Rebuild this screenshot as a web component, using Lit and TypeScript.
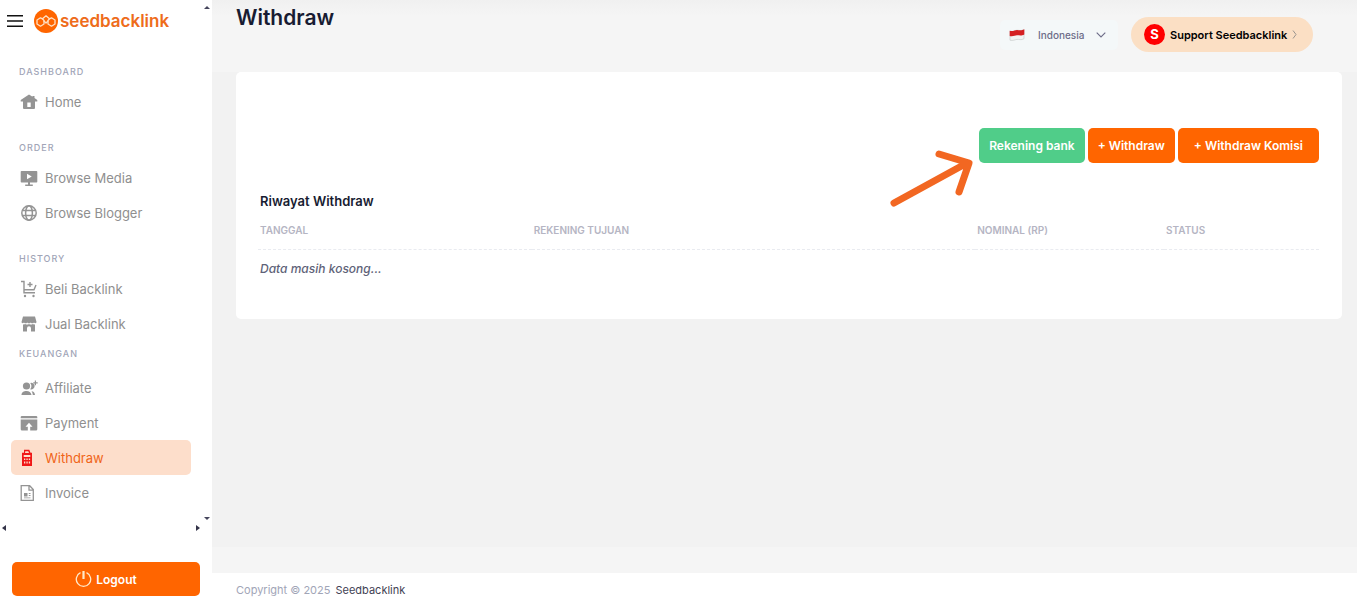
import { LitElement, html, css, svg, nothing } from "lit";
import { customElement, property } from "lit/decorators.js";
import { classMap } from "lit/directives/class-map.js";

const icons: Record<string, unknown> = {
  home: svg`<path fill-rule="evenodd" d="M9 1.500.7 7v1.500H3V15a1 1 0 0 0 1 1h10a1 1 0 0 0 1-1V8.500h2.300V7L14.500 5V3h-2v.8zM7.300 9.500h3.400V14H7.300z" fill="currentColor"/>`,
  media: svg`<path fill-rule="evenodd" d="M1.500 2h15a.8.8 0 0 1 .8.8v10a.8.8 0 0 1-.8.800H10v1.800h2.800V17H5.200v-1.600H8v-1.800H1.500a.8.8 0 0 1-.8-.8v-10a.8.8 0 0 1 .8-.8zM7 4.800v5.400L11.800 7.500z" fill="currentColor"/>`,
  globe: svg`<g fill="none" stroke="currentColor" stroke-width="1.500"><circle cx="9" cy="9" r="7.200"/><ellipse cx="9" cy="9" rx="3.400" ry="7.200"/><path d="M2.300 6.500h13.400M2.300 11.500h13.400"/></g>`,
  cart: svg`<g fill="none" stroke="currentColor" stroke-width="1.400"><path d="M1 1.500h3v11.300h11M4 9.700h10L16 5M10 2v5M7.500 4.500h5"/></g><circle cx="5" cy="16" r="1.200" fill="currentColor"/><circle cx="13.500" cy="16" r="1.200" fill="currentColor"/>`,
  store: svg`<path d="M3 1.500h12l1.500 5.500c0 1.300-1.700 1.600-2.500.4-.8 1.200-2.400 1.200-3.200 0-.8 1.200-2.800 1.200-3.600 0-.8 1.200-2.400 1.200-3.200 0-.8 1.200-2.500.9-2.500-.4z" fill="currentColor"/><path d="M3 9.300c1 .4 1.600.1 2.200-.3 1 .7 2.600.7 3.800 0 1.200.7 2.800.7 3.800 0 .6.400 1.200.7 2.200.3V16.500h-4v-3.300a2 2 0 0 0-4 0v3.300H3z" fill="currentColor"/>`,
  affiliate: svg`<g fill="currentColor"><circle cx="6.500" cy="7" r="3.600"/><path d="M10.200 4a3.300 3.300 0 1 1 0 6.200 5 5 0 0 0 0-6.200zM1.500 16c0-2.800 2.300-4 5-4s4.500 1.200 5 4zM11.500 12.200c2.200.1 3.300 1.300 3.500 3.800h-2.200c-.1-1.600-.5-2.800-1.300-3.800zM13.300 3.200h1.500V1.500l1.200.1v1.600h1.700v1.300H16v1.800h-1.300V4.500h-1.400z"/></g>`,
  payment: svg`<path d="M1.500 2h15l.8.800v1.400H.7V2.800zM.7 5.500h16.600v9.700a1.300 1.300 0 0 1-1.300 1.300h-5.800v-3.800h2.300L9 8.700l-3.500 4h2.300v3.800H2a1.300 1.300 0 0 1-1.300-1.300z" fill="currentColor"/>`,
  withdraw: svg`<path fill-rule="evenodd" d="M4 .8h5.300l1.200 3H12V17H2V3.800h2zM5.300 2.200l-.3 1.800h4l-.7-1.800zM3.700 6v2h6.600V6zM4 9.500v1.500h1.300V9.500zM6.400 9.500v1.500h1.300V9.500zM8.800 9.500v1.500h1.300V9.500zM4 12.500v2h1.300v-2zM6.400 12.500v2h1.300v-2zM8.800 12.500v2h1.300v-2z" fill="currentColor"/>`,
  invoice: svg`<path d="M1.200 1.700h8.500l3.600 3.800v10.800H1.200zM9 1.700v4.500h4.300" fill="none" stroke="currentColor" stroke-width="1.300"/><path d="M4 9h3.500v3.500H4zM8.800 9h1.700v1H8.800zM8.800 11h1.700v1H8.800zM4 13.500h6.500v.8H4z" fill="currentColor"/>`,
};

interface NavItem { icon: string; label: string; active?: boolean }
interface NavGroup { title: string; items: NavItem[]; tight?: boolean }

const groups: NavGroup[] = [
  { title: "Dashboard", items: [{ icon: "home", label: "Home" }] },
  { title: "Order", items: [{ icon: "media", label: "Browse Media" }, { icon: "globe", label: "Browse Blogger" }] },
  { title: "History", items: [{ icon: "cart", label: "Beli Backlink" }, { icon: "store", label: "Jual Backlink" }] },
  {
    title: "Keuangan",
    tight: true,
    items: [
      { icon: "affiliate", label: "Affiliate" },
      { icon: "payment", label: "Payment" },
      { icon: "withdraw", label: "Withdraw", active: true },
      { icon: "invoice", label: "Invoice" },
    ],
  },
];

@customElement("side-nav")
export class SideNav extends LitElement {
  @property({ attribute: false }) groups: NavGroup[] = [];

  static styles = css`
    :host { display: flex; flex-direction: column; background: #fff; height: 100vh; min-height: 0; }
    button { font: inherit; cursor: pointer; }
    .scroll { flex: 1; min-height: 0; display: grid; grid-template-columns: 1fr 10px; grid-template-rows: 1fr 12px; }
    .content { overflow: hidden; min-height: 0; }
    .vbar { display: flex; flex-direction: column; justify-content: space-between; align-items: center; padding: 6px 0 2px; }
    .hbar { display: flex; justify-content: space-between; align-items: center; padding: 0 2px; }
    .bar-end { display: block; }
    .brand { display: flex; align-items: center; gap: 11px; height: 42px; padding-left: 7px; }
    .burger { display: flex; padding: 0; border: 0; background: none; }
    .logo { display: flex; align-items: center; gap: 2px; color: #ee6c1b; text-decoration: none; font-size: 17px; line-height: 24px; font-weight: 600; }
    nav { padding: 19px 11px 0; }
    .group { margin-bottom: 18px; }
    .group.near { margin-bottom: 2px; }
    .title { margin: 0; padding: 0 0 1px 8px; font-size: 9px; line-height: 22px; font-weight: 500; letter-spacing: 1px; text-transform: uppercase; color: #a1a5b7; }
    .tight .title { padding-bottom: 5px; }
    ul { margin: 0; padding: 0; list-style: none; }
    .item { display: flex; align-items: center; gap: 7px; height: 35px; padding-left: 9px; border-radius: 5px; color: #8f8f8f; font-size: 13px; text-decoration: none; }
    .item.active { background: #fddecb; color: #f06418; }
    .item svg { color: #949494; }
    .item.active svg { color: #f01818; }
    .foot { padding: 28px 12px 3px; }
    .logout { display: flex; align-items: center; justify-content: center; gap: 4px; width: 100%; height: 34px; border: 0; border-radius: 5px; background: #ff6500; color: #fff; font-size: 12px; font-weight: 600; }
  `;

  render() {
    return html`
      <div class="scroll">
        <div class="content">
          <div class="brand">
            <button class="burger" aria-label="Menu">
              <svg width="16" height="12" viewBox="0 0 16 12"><path d="M0 .8h16M0 6h16M0 11.200h16" stroke="#111" stroke-width="1.500"/></svg>
            </button>
            <a class="logo" href="#">
              <svg width="24" height="24" viewBox="0 0 24 24">
                <circle cx="12" cy="12" r="12" fill="#ff6500"/>
                <g fill="none" stroke="#ffe0c4" stroke-width="1.300" stroke-linejoin="round" stroke-linecap="round">
                  <path d="m8.500 9.800-2-1L3 11v4l3.500 2.200L10 15v-3.500L8.500 9.800"/>
                  <path d="m15.500 9.800 2-1L21 11v4l-3.500 2.200L14 15v-3.500l1.500-1.700"/>
                  <path d="M8.500 9.800 12 6.800l3.500 3M10 12l2 2 2-2"/>
                </g>
              </svg>
              seedbacklink
            </a>
          </div>
          <nav>
            ${this.groups.map((g, i) => html`
              <section class=${classMap({ group: true, tight: !!g.tight, near: !!this.groups[i + 1]?.tight })}>
                <h2 class="title">${g.title}</h2>
                <ul>
                  ${g.items.map((it) => html`
                    <li><a href="#" class=${classMap({ item: true, active: !!it.active })} aria-current=${it.active ? "page" : nothing}>
                      <svg width="18" height="18" viewBox="0 0 18 18">${icons[it.icon]}</svg>${it.label}
                    </a></li>`)}
                </ul>
              </section>`)}
          </nav>
        </div>
        <div class="vbar" aria-hidden="true">
          <svg class="bar-end" width="6" height="3"><path d="M0 3 3 0l3 3z" fill="#45455c"/></svg>
          <svg class="bar-end" width="6" height="3"><path d="M0 0h6L3 3z" fill="#45455c"/></svg>
        </div>
        <div class="hbar" aria-hidden="true">
          <svg class="bar-end" width="4" height="6"><path d="M4 0v6L0 3z" fill="#333348"/></svg>
          <svg class="bar-end" width="4" height="6"><path d="M0 0v6l4-3z" fill="#333348"/></svg>
        </div>
      </div>
      <div class="foot">
        <button class="logout">
          <svg width="17" height="17" viewBox="0 0 17 17" fill="none" stroke="#ffe9c9"><path d="M5.500 1.700a7.200 7.200 0 1 0 6 0" stroke-width="1.300"/><path d="M8.500 0v8" stroke-width="2.200"/></svg>
          Logout
        </button>
      </div>`;
  }
}

@customElement("app-root")
export class AppRoot extends LitElement {
  static styles = css`
    :host { display: grid; grid-template-columns: 212px minmax(0, 1fr); min-height: 100vh; background: #f2f2f2; font-family: Inter, sans-serif; color: #181c32; }
    * { box-sizing: border-box; }
    button, select { font: inherit; cursor: pointer; }
    side-nav { position: sticky; top: 0; }
    .page { display: flex; flex-direction: column; }
    .top { display: flex; justify-content: space-between; height: 72px; padding: 4px 44px 0 24px; background: linear-gradient(#f0f0f0, #f5f5f5 16px); }
    h1 { margin: 0; font-size: 21px; line-height: 28px; font-weight: 600; }
    .tools { display: flex; align-items: center; gap: 13px; height: 61px; }
    .lang { display: flex; align-items: center; height: 30px; width: 118px; padding: 0 12px 0 9px; border-radius: 5px; background: #f4f8f9; }
    .lang select { flex: 1; min-width: 0; height: 30px; padding: 0 0 0 13px; border: 0; appearance: none; background: none; color: #6c6c88; font-size: 10px; font-weight: 500; }
    .support { display: flex; align-items: center; gap: 5px; height: 35px; width: 182px; padding: 0 13px; border: 0; border-radius: 18px; background: #fbdfc4; color: #000; font-size: 11px; font-weight: 600; white-space: nowrap; }
    .badge { flex: none; width: 21px; height: 21px; border-radius: 50%; background: #f00; color: #fff; font-size: 13px; line-height: 21px; font-weight: 700; }
    main { flex: 1; padding: 0 15px 24px 24px; }
    .card { padding: 56px 23px 32px 22px; border-radius: 5px; background: #fff; }
    .actions { display: flex; justify-content: flex-end; gap: 3px; }
    .spot { position: relative; }
    .pointer { position: absolute; right: 111px; top: 20px; }
    .btn { height: 35px; padding: 0 10px; border: 0; border-radius: 5px; background: #ff6500; color: #fff; font-size: 12px; font-weight: 600; white-space: nowrap; }
    .btn.bank { background: #50cd89; }
    .btn.wide { padding: 0 16px; }
    h2 { margin: 28px 0 0 2px; font-size: 13px; line-height: 20px; font-weight: 600; }
    table { width: 100%; table-layout: fixed; border-collapse: collapse; text-align: left; }
    th { height: 38px; padding: 0 2px; border-bottom: 1px dashed #e9ebf0; font-size: 10px; font-weight: 600; text-transform: uppercase; color: #b5b5c3; }
    td { height: 38px; padding: 0 2px; font-size: 12px; font-weight: 500; font-style: italic; color: #5e6278; }
    .c1 { width: 25.8%; }
    .c2 { width: 41.8%; }
    .c3 { width: 17.8%; }
    .base { height: 26px; background: #f5f5f5; }
    footer { display: flex; gap: 5px; height: 26px; padding: 9px 24px 0; background: #fff; font-size: 11px; line-height: 16px; color: #a1a5b7; }
    footer a { color: #3f4254; text-decoration: none; }
  `;

  render() {
    return html`
      <side-nav .groups=${groups}></side-nav>
      <div class="page">
        <header class="top">
          <h1>Withdraw</h1>
          <div class="tools">
            <label class="lang">
              <svg width="16" height="12" viewBox="0 0 16 12" aria-hidden="true">
                <path d="M1 2c3 1.200 5-.8 7-.8s4 1 7-.7v9.200c-3 1.700-5 .5-7 .7s-4 1.600-7 .8z" fill="#f3f3f3" stroke="#c9cdcd" stroke-width=".7"/>
                <path d="M.7 1.700c3 1.200 5.300-.8 7.300-.8s4.300 1 7.300-.7v5.300c-3 1.600-5.300.6-7.300.8s-4.300 1.500-7.300.7z" fill="#d51f22"/>
              </svg>
              <select aria-label="Bahasa"><option>Indonesia</option></select>
              <svg width="10" height="6" viewBox="0 0 10 6" aria-hidden="true"><path d="m.7.700 4.300 4.300L9.300.7" fill="none" stroke="#6c6c88" stroke-width="1.100"/></svg>
            </label>
            <button class="support">
              <span class="badge">S</span>Support Seedbacklink
              <svg width="5" height="9" viewBox="0 0 5 9" aria-hidden="true"><path d="m1 .5 3 4-3 4" fill="none" stroke="#9a948e"/></svg>
            </button>
          </div>
        </header>
        <main>
          <section class="card">
            <div class="actions">
              <div class="spot">
                <button class="btn bank">Rekening bank</button>
                <svg class="pointer" width="86" height="62" viewBox="0 0 86 62" fill="none" stroke="#f26722" stroke-width="7" stroke-linecap="round" stroke-linejoin="round" aria-hidden="true"><path d="M6 55 79 15M51 6l30 9-10 29"/></svg>
              </div>
              <button class="btn">+ Withdraw</button>
              <button class="btn wide">+ Withdraw Komisi</button>
            </div>
            <h2>Riwayat Withdraw</h2>
            <table>
              <thead><tr><th class="c1">Tanggal</th><th class="c2">Rekening Tujuan</th><th class="c3">Nominal (Rp)</th><th>Status</th></tr></thead>
              <tbody><tr><td colspan="4">Data masih kosong...</td></tr></tbody>
            </table>
          </section>
        </main>
        <div class="base"></div>
        <footer><span>Copyright © 2025</span><a href="#">Seedbacklink</a></footer>
      </div>`;
  }
}
